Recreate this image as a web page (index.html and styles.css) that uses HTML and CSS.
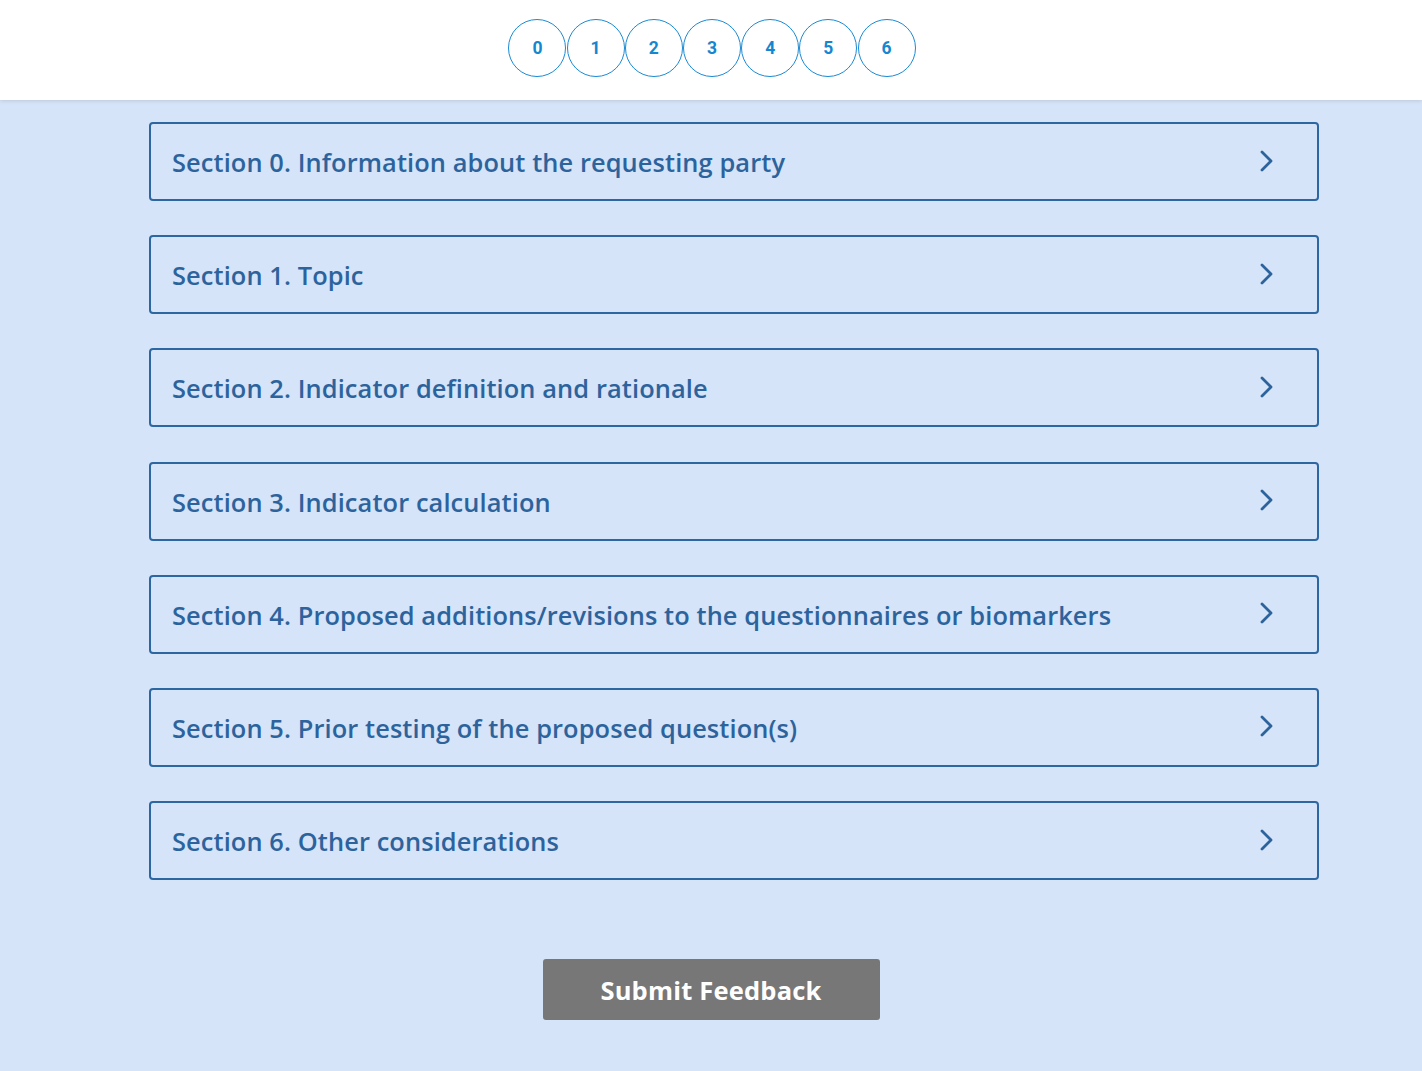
FILE: index.html
```html
<!DOCTYPE html>
<html lang="en">
<head>
<meta charset="utf-8">
<title>Feedback</title>
<link rel="stylesheet" href="styles.css">
</head>
<body>
<header class="topbar">
  <nav class="steps">
    <a class="step">0</a>
    <a class="step">1</a>
    <a class="step">2</a>
    <a class="step">3</a>
    <a class="step">4</a>
    <a class="step">5</a>
    <a class="step">6</a>
  </nav>
</header>
<main class="content">
  <div class="sections">
    <div class="section"><span class="title">Section 0. Information about the requesting party</span><svg class="chev" viewBox="0 0 16 22" width="16" height="22"><path d="M3 2 L12 11 L3 20" fill="none" stroke="#2d639c" stroke-width="2.8" stroke-linecap="round" stroke-linejoin="round"/></svg></div>
    <div class="section"><span class="title">Section 1. Topic</span><svg class="chev" viewBox="0 0 16 22" width="16" height="22"><path d="M3 2 L12 11 L3 20" fill="none" stroke="#2d639c" stroke-width="2.8" stroke-linecap="round" stroke-linejoin="round"/></svg></div>
    <div class="section"><span class="title">Section 2. Indicator definition and rationale</span><svg class="chev" viewBox="0 0 16 22" width="16" height="22"><path d="M3 2 L12 11 L3 20" fill="none" stroke="#2d639c" stroke-width="2.8" stroke-linecap="round" stroke-linejoin="round"/></svg></div>
    <div class="section"><span class="title">Section 3. Indicator calculation</span><svg class="chev" viewBox="0 0 16 22" width="16" height="22"><path d="M3 2 L12 11 L3 20" fill="none" stroke="#2d639c" stroke-width="2.8" stroke-linecap="round" stroke-linejoin="round"/></svg></div>
    <div class="section"><span class="title">Section 4. Proposed additions/revisions to the questionnaires or biomarkers</span><svg class="chev" viewBox="0 0 16 22" width="16" height="22"><path d="M3 2 L12 11 L3 20" fill="none" stroke="#2d639c" stroke-width="2.8" stroke-linecap="round" stroke-linejoin="round"/></svg></div>
    <div class="section"><span class="title">Section 5. Prior testing of the proposed question(s)</span><svg class="chev" viewBox="0 0 16 22" width="16" height="22"><path d="M3 2 L12 11 L3 20" fill="none" stroke="#2d639c" stroke-width="2.8" stroke-linecap="round" stroke-linejoin="round"/></svg></div>
    <div class="section"><span class="title">Section 6. Other considerations</span><svg class="chev" viewBox="0 0 16 22" width="16" height="22"><path d="M3 2 L12 11 L3 20" fill="none" stroke="#2d639c" stroke-width="2.8" stroke-linecap="round" stroke-linejoin="round"/></svg></div>
  </div>
  <button class="submit" type="button">Submit Feedback</button>
</main>
</body>
</html>
```
FILE: styles.css
```css
html, body {
  margin: 0;
  padding: 0;
}
body {
  background: #d5e4f8;
  font-family: "Open Sans", "Noto Sans", sans-serif;
  min-height: 1071px;
}
.topbar {
  background: #ffffff;
  height: 100px;
  box-shadow: 0 1px 4px rgba(0, 0, 0, 0.12);
  display: flex;
  justify-content: center;
  padding-top: 19px;
  padding-left: 2px;
  box-sizing: border-box;
  position: relative;
}
.steps {
  display: flex;
  gap: 0.2px;
  height: 58px;
}
.step {
  width: 58px;
  height: 58px;
  box-sizing: border-box;
  border: 1px solid #1a8ad4;
  border-radius: 50%;
  display: flex;
  align-items: center;
  justify-content: center;
  font-family: Roboto, sans-serif;
  font-weight: 700;
  font-size: 17.5px;
  color: #1587d0;
}
.content {
  display: flex;
  flex-direction: column;
  align-items: center;
  padding-top: 22px;
}
.sections {
  display: flex;
  flex-direction: column;
  gap: 34.2px;
  width: 1170px;
  margin-left: 46px;
}
.section {
  height: 79px;
  box-sizing: border-box;
  border: 2px solid #2d67a2;
  border-radius: 4px;
  display: flex;
  align-items: center;
  justify-content: space-between;
  padding: 0 42px 0 21px;
}
.title {
  font-size: 25.4px;
  font-weight: 600;
  color: #2d639c;
  letter-spacing: 0.1px;
  margin-top: 1px;
}
.chev {
  display: block;
  margin-top: -2px;
}
.submit {
  margin-top: 79px;
  width: 337px;
  height: 61px;
  background: #777777;
  border: none;
  border-radius: 3px;
  color: #ffffff;
  font-family: "Open Sans", "Noto Sans", sans-serif;
  font-weight: 700;
  font-size: 25.5px;
  letter-spacing: 0.2px;
}
```
